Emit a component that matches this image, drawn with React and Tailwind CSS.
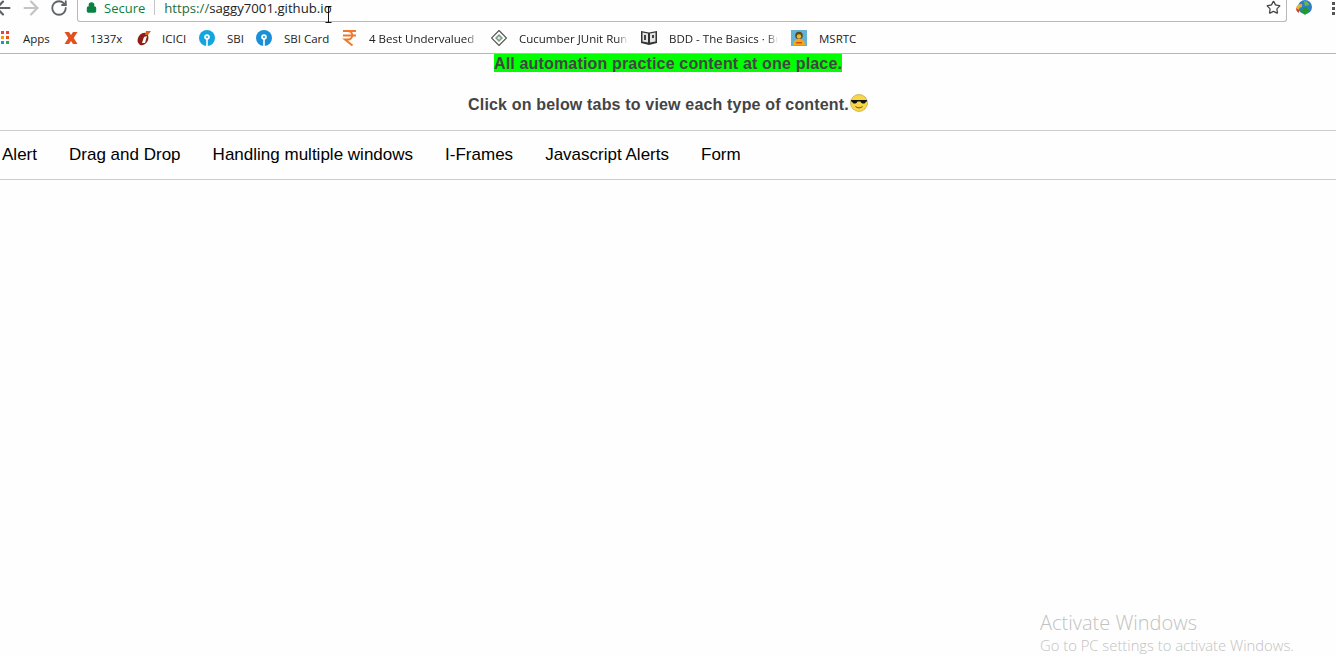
import React from "react";
import { ArrowLeft, ArrowRight, RotateCw, Star, Lock } from "lucide-react";

function AppsIcon() {
  const colors = ["#ea4335", "#ea4335", "#f59b00", "#e8531f", "#1a8fe3", "#2fa84f"];
  return (
    <div className="ml-px grid w-[8px] grid-cols-2 gap-x-[2px] gap-y-[2px]">
      {colors.map((c, i) => (
        <span key={i} className="h-[3px] w-[3px]" style={{ backgroundColor: c }} />
      ))}
    </div>
  );
}

function XIcon() {
  return (
    <svg width="14" height="14" viewBox="0 0 14 14">
      <path d="M0.500 1h4.500l2 3 2-3h4.500l-3.800 6 3.800 6H9L7 10l-2 3H0.500l3.800-6z" fill="#e2501f" />
    </svg>
  );
}

function IciciIcon() {
  return (
    <svg width="16" height="16" viewBox="0 0 16 16">
      <ellipse cx="7" cy="9" rx="5" ry="6.500" transform="rotate(30 7 9)" fill="#8f1d14" />
      <path d="M8 7l3-1-2 7H6z" fill="#fff" />
      <path d="M10 1h5l-3 4H9z" fill="#d9621a" />
    </svg>
  );
}

function SbiIcon({ color }) {
  return (
    <svg width="16" height="16" viewBox="0 0 16 16">
      <circle cx="8" cy="8" r="8" fill={color} />
      <circle cx="8" cy="7" r="2.800" fill="#fff" />
      <circle cx="8" cy="7" r="1" fill={color} />
      <rect x="7.200" y="9" width="1.600" height="7" fill="#fff" />
    </svg>
  );
}

function RupeeIcon() {
  return (
    <svg width="15" height="17" viewBox="0 0 15 17" fill="none" stroke="#f0782a" strokeWidth="2">
      <path d="M1 2h13M1 6.500h13M3 2h3a4.200 4.200 0 0 1 0 8.500H3l7.500 6" />
    </svg>
  );
}

function DiamondIcon() {
  return (
    <svg width="16" height="16" viewBox="0 0 16 16">
      <path d="M8 0.500l7.500 7.500-7.500 7.500-7.500-7.500z" fill="#fff" stroke="#555" strokeWidth="1.200" />
      <path d="M8 4l4 4-4 4-4-4z" fill="#7d9a86" />
      <circle cx="8" cy="8" r="1.500" fill="#dfe8e2" />
    </svg>
  );
}

function BookIcon() {
  return (
    <svg width="16" height="15" viewBox="0 0 16 15">
      <path d="M0 1l8 1.500 8-1.500v12l-8 2-8-2z" fill="#333" />
      <path d="M1.500 2.500l5.500 1v9l-5.500-1zM14.500 2.500l-5.500 1v9l5.500-1z" fill="#e4e4e4" />
      <path d="M3 5h2v5H3zM11 5h2v3h-2z" fill="#444" />
    </svg>
  );
}

function MsrtcIcon() {
  return (
    <svg width="16" height="16" viewBox="0 0 16 16">
      <rect width="16" height="16" fill="#63b2d6" />
      <circle cx="8" cy="5.500" r="3.800" fill="#5a4a20" />
      <circle cx="8" cy="6.500" r="2.200" fill="#f4b92e" />
      <path d="M2 15c0-4 3-6 6-6s6 2 6 6z" fill="#f2a71c" />
      <path d="M5 12h6v1.500H5z" fill="#c9541a" />
    </svg>
  );
}

function DownloadIcon() {
  return (
    <svg width="18" height="16" viewBox="0 0 18 16">
      <circle cx="10" cy="7" r="7" fill="#2f7fc4" />
      <path d="M9 1c3 0 5 2 5 4l-4 1z" fill="#6bb84a" />
      <path d="M1 8a6 5 0 0 1 6-4v3a3 3 0 0 0-3 3z" fill="#e5b52e" />
      <path d="M1 8l3 2v3C2 12 1 10 1 8z" fill="#c83d2c" />
      <path d="M8 7h4v3h3l-5 5-5-5h3z" fill="#1f9a2c" />
    </svg>
  );
}

function CoolEmoji() {
  return (
    <svg width="18" height="18" viewBox="0 0 18 18">
      <circle cx="9" cy="9" r="8.500" fill="#f7d64a" stroke="#b8962a" strokeWidth="0.600" />
      <path d="M1 6h16v1.500h-1c-.3 2.500-4.500 3-5.500 0H7.500C6.500 10.500 2.300 10 2 7.500H1z" fill="#111" />
      <path d="M5.500 12.500c2 1.800 5 1.800 7 0" fill="none" stroke="#6b4f10" strokeWidth="1" />
    </svg>
  );
}

const bookmarks = [
  { icon: <AppsIcon />, label: "Apps", slot: "w-[23px]", width: "w-[41px]" },
  { icon: <XIcon />, label: "1337x", slot: "w-[26px]", width: "w-[46px]" },
  { icon: <IciciIcon />, label: "ICICI", slot: "w-[26px]", width: "w-[37px]" },
  { icon: <SbiIcon color="#12a5e0" />, label: "SBI", slot: "w-[28px]", width: "w-[29px]" },
  { icon: <SbiIcon color="#1a8fd6" />, label: "SBI Card", slot: "w-[28px]", width: "w-[58px]" },
  { icon: <RupeeIcon />, label: "4 Best Undervalued E", slot: "w-[27px]", width: "w-[109px] mr-[13px]", fade: true },
  { icon: <DiamondIcon />, label: "Cucumber JUnit Runr", slot: "w-[28px]", width: "w-[109px] mr-[13px]", fade: true },
  { icon: <BookIcon />, label: "BDD - The Basics · Bu", slot: "w-[28px]", width: "w-[109px] mr-[13px]", fade: true },
  { icon: <MsrtcIcon />, label: "MSRTC", slot: "w-[28px]", width: "w-[40px]" },
];

const tabs = ["Alert", "Drag and Drop", "Handling multiple windows", "I-Frames", "Javascript Alerts", "Form"];

export default function App() {
  return (
    <div className="relative h-[656px] overflow-hidden bg-[#fefefe] font-['Liberation_Sans',Arial,sans-serif]">
      {/* Browser toolbar */}
      <div className="flex h-[22px] items-center font-['Open_Sans',sans-serif] text-[13px] leading-[16px]">
        <div className="-ml-[8px] flex w-[85px] shrink-0 items-center gap-[6px] pb-[6px]">
          <ArrowLeft size={22} strokeWidth={2.400} className="shrink-0 text-[#5f6368]" />
          <ArrowRight size={22} strokeWidth={2.400} className="shrink-0 text-[#c4c4c4]" />
          <RotateCw size={18} strokeWidth={2.400} className="ml-[2px] shrink-0 text-[#5f6368]" />
        </div>
        <div className="flex h-[22px] w-[1210px] shrink-0 items-center rounded-b-[3px] border border-t-0 border-[#b8b8b8] pb-[6px] pl-[8px] pr-[5px]">
          <Lock size={11} fill="#0b8043" strokeWidth={2.500} className="text-[#0b8043]" />
          <span className="ml-[7px] text-[#0b8043]">Secure</span>
          <span className="ml-[9px] h-[15px] w-px bg-[#c4c4c4]" />
          <span className="ml-[9px] text-[13.200px] text-[#1e6b3c]">https://</span>
          <span className="text-[13.200px] text-[#222]">saggy7001.github.io</span>
          <Star size={15} strokeWidth={2} className="ml-auto text-[#444]" />
        </div>
        <div className="ml-[8px] shrink-0 pb-[6px]">
          <DownloadIcon />
        </div>
        <div className="ml-[19px] flex shrink-0 flex-col gap-[2px] pb-[6px]">
          <span className="h-[3px] w-[3px] bg-[#555]" />
          <span className="h-[3px] w-[3px] bg-[#555]" />
          <span className="h-[3px] w-[3px] bg-[#555]" />
        </div>
      </div>

      {/* Bookmarks bar */}
      <div className="flex h-[32px] items-center border-b border-[#b5b5b5] font-['Open_Sans',sans-serif] text-[11.500px] leading-[16px] text-[#222]">
        {bookmarks.map((b) => (
          <div key={b.label} className="flex shrink-0 items-center">
            <span className={`flex shrink-0 items-center ${b.slot}`}>{b.icon}</span>
            <span
              className={`${b.width} overflow-hidden whitespace-nowrap pt-[2px] ${
                b.fade ? "[mask-image:linear-gradient(to_right,black_90%,transparent)]" : ""
              }`}
            >
              {b.label}
            </span>
          </div>
        ))}
      </div>

      {/* Page heading */}
      <div className="text-center text-base font-bold tracking-[0.17px] text-[#444]">
        <p className="flex h-[18px] justify-center">
          <span className="h-[18px] bg-[#00ff00] leading-[20px]">All automation practice content at one place.</span>
        </p>
        <div className="mt-[23px] flex h-[20px] items-center justify-center leading-[20px]">
          <span>Click on below tabs to view each type of content.</span>
          <span className="-mt-[4px] ml-px">
            <CoolEmoji />
          </span>
        </div>
      </div>

      {/* Tabs */}
      <nav className="mt-[15px] flex h-[50px] items-center gap-[32px] border-y border-[#ccc] pl-[2px] text-[17px] tracking-[0.006px] text-black">
        {tabs.map((t) => (
          <a key={t}>{t}</a>
        ))}
      </nav>

      {/* I-beam cursor */}
      <svg className="absolute left-[325px] top-[6px]" width="7" height="17" viewBox="0 0 7 17" fill="none" stroke="#111" strokeWidth="1">
        <path d="M0.500 0.500h6M3.500 0.500v16M0.500 16.500h6" />
      </svg>

      {/* Windows watermark */}
      <div className="absolute left-[1040px] top-[610px] font-['Open_Sans',sans-serif] font-light text-[#c2c2c2]">
        <p className="text-[20px] leading-[25px]">Activate Windows</p>
        <p className="text-[14.800px] leading-[20px]">Go to PC settings to activate Windows.</p>
      </div>
    </div>
  );
}
